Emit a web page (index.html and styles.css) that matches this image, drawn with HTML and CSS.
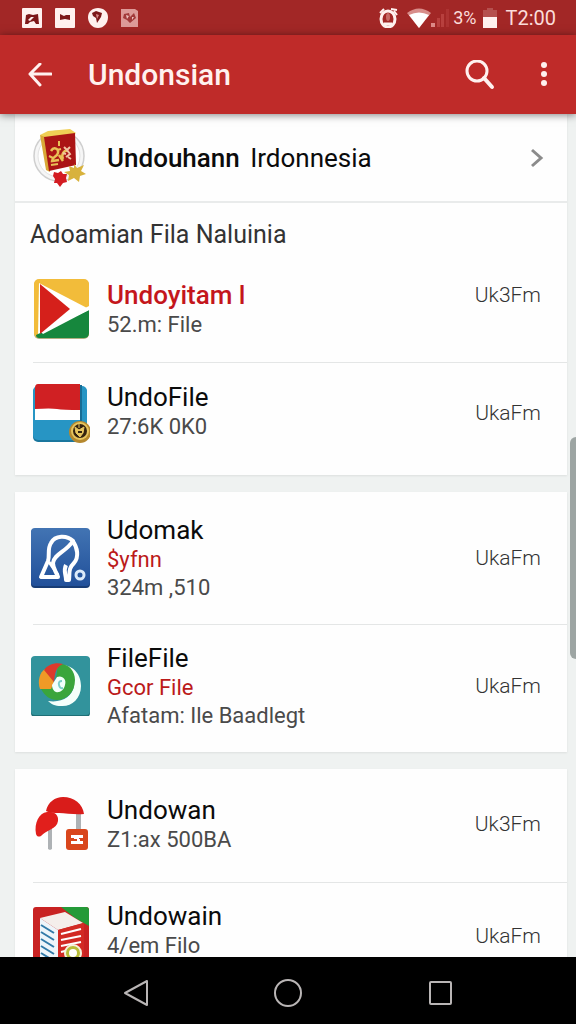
FILE: index.html
```html
<!DOCTYPE html>
<html lang="id">

<head>
    <meta charset="utf-8">
    <meta name="viewport" content="width=device-width, initial-scale=1.0">
    <title>Undonsian</title>
    <link rel="stylesheet" href="styles.css">
</head>

<body>
    <div class="status">
        <div class="status-left">
            <svg width="20" height="20" viewBox="0 0 20 20"><rect width="20" height="20" rx="1" fill="#fff1ef"/><path d="M3 16l1-9 3-1 4 1 5-1 1 10h-3l-2-3-4 1-2 2z" fill="#7d1719"/><path d="M6 12l3-3h3l-4 4z" fill="#fff1ef"/></svg>
            <svg width="20" height="20" viewBox="0 0 20 20"><rect width="20" height="20" rx="1" fill="#fff1ef"/><path d="M5 6l4 2 2-1 4 0v5l-5-1-5 1z" fill="#7d1719"/></svg>
            <svg width="20" height="20" viewBox="0 0 20 20"><path d="M10 0c6 0 10 4 10 9 0 6-4 11-10 11S0 15 0 9c0-5 4-9 10-9z" fill="#fff1ef"/><path d="M4 5l4-2 6 2-1 4-4 6-1-5-3-2z" fill="#7d1719"/><path d="M8 6l3 1-2 4z" fill="#d88"/></svg>
            <svg width="17" height="18" viewBox="0 0 17 18"><path d="M0 0h14l3 2v16H0z" fill="#dd9a98"/><path d="M3 5l5-1 1 4 4-4 2 5-6 5-3-3-4-2z" fill="#a23a3a"/><path d="M5 6l3 1-2 3zM11 8l2 0-2 3z" fill="#efc2c0"/></svg>
        </div>
        <div class="status-right">
            <svg width="20" height="20" viewBox="0 0 20 20"><ellipse cx="9" cy="11" rx="7" ry="8" fill="none" stroke="#fff1ef" stroke-width="3"/><ellipse cx="9" cy="9" rx="2" ry="4" fill="#c76a66"/><path d="M5 16h8" stroke="#fff1ef" stroke-width="3"/><path d="M1 5l4-4M12 1l6 1M15 3l3 4" stroke="#fff1ef" stroke-width="2"/></svg>
            <svg width="24" height="20" viewBox="0 0 24 20"><path d="M0 5Q12-4 24 5L12 20z" fill="#d88d8a"/><path d="M2 7Q12 2 22 7L12 20z" fill="#fff"/></svg>
            <svg width="18" height="20" viewBox="0 0 18 20" fill="#b8403e"><rect y="15" width="4" height="4" fill="#dd8a87"/><rect x="6" y="10" width="3" height="9"/><rect x="10" y="6" width="3" height="13"/><rect x="15" y="1" width="3" height="18" opacity=".5"/></svg>
            <span class="percent">3%</span>
            <svg width="14" height="20" viewBox="0 0 14 20"><path d="M4 0h6v2h4v8H0V2h4z" fill="#b5504e"/><path d="M0 9h14v11H0z" fill="#fff1ef"/></svg>
            <span class="clock">T2:00</span>
        </div>
    </div>

    <header class="appbar">
        <button class="icon-btn" aria-label="Kembali">
            <svg width="24" height="24" viewBox="0 0 24 24" fill="none" stroke="#fff1ef" stroke-width="3" stroke-linecap="round" stroke-linejoin="round"><path d="M23 11H2M12 1L2 11l10 11"/></svg>
        </button>
        <h1>Undonsian</h1>
        <button class="icon-btn" aria-label="Cari">
            <svg width="30" height="30" viewBox="0 0 30 30" fill="none" stroke="#fff1ef" stroke-width="3" stroke-linecap="round"><circle cx="12" cy="11" r="10"/><path d="M19 18l8 9" stroke-width="4"/></svg>
        </button>
        <button class="icon-btn more" aria-label="Menu">
            <svg width="8" height="26" viewBox="0 0 8 26" fill="#fff1ef"><circle cx="4" cy="3" r="3"/><circle cx="4" cy="12" r="3"/><circle cx="4" cy="21" r="3"/></svg>
        </button>
    </header>

    <main>
        <section class="card">
            <a class="featured" href="#">
                <svg class="icon" width="60" height="60" viewBox="0 0 60 60">
                    <circle cx="29" cy="28" r="25" fill="#f6f6f6" stroke="#cfcfcf" stroke-width="1.500"/>
                    <circle cx="29" cy="28" r="21" fill="#fff" stroke="#e2e2e2"/>
                    <path d="M10 7l8-4 22-2 6 4-4 3-29 3z" fill="#f0cf55"/>
                    <path d="M10 7l5 2 5 35-4-2z" fill="#d9a937"/>
                    <path d="M14 9l31-4 1 32-27 6z" fill="#ab1515"/>
                    <path d="M21 23c3-5 8-2 7 2s-6 4-6 8l7-1M29 27l4 6M33 31c-2-5 1-9 5-8" fill="none" stroke="#e9c057" stroke-width="2.500"/>
                    <path d="M21 37l7-1M29 13v5M19 28l4 2M27 22l4-1" fill="none" stroke="#e9c057" stroke-width="2"/>
                    <path d="M34 19l3 3 3-3M37 22l3 4-4 3M33 25l3 1M38 29l3 2" fill="none" stroke="#f0c3a4" stroke-width="2"/>
                    <path d="M44 36l3 4 7-3-3 6 5 3-6 2-1 6-5-4-6 3 1-6-5-3 6-1-1-5 5 2z" fill="#d8b23c"/>
                    <path d="M24 44l4 1 3-2 2 3h4l-1 4 1 4-4 1-3 4-3-4-3 0 1-4-2-3z" fill="#d31c22"/>
                </svg>
                <span class="featured-name"><b>Undouhann</b> Irdonnesia</span>
                <svg width="14" height="20" viewBox="0 0 14 20" fill="none" stroke="#8b8b8b" stroke-width="3"><path d="M2 2l9 8-9 8"/></svg>
            </a>
            <h2>Adoamian Fila Naluinia</h2>
            <ul>
                <li class="row low">
                    <svg class="icon" width="60" height="60" viewBox="0 0 60 60">
                        <rect x="4" y="1" width="55" height="59" rx="5" fill="#b0ae80"/>
                        <rect x="4" width="55" height="59" rx="5" fill="#f2bc3a"/>
                        <path d="M9 4l50 26v3L8 57z" fill="#fff"/>
                        <path d="M59 31v23q0 5-5 5H9q-3 0-3-3z" fill="#16873d"/>
                        <path d="M11 53L59 27v4L13 55z" fill="#fff"/>
                        <path d="M10 5l30 25L10 55z" fill="#d5201b"/>
                    </svg>
                    <div class="info">
                        <h3 class="hot">Undoyitam l</h3>
                        <p>52.m: File</p>
                    </div>
                    <span class="meta">Uk3Fm</span>
                </li>
                <li class="row end">
                    <svg class="icon" width="60" height="60" viewBox="0 0 60 60">
                        <rect x="3" y="4" width="54" height="55" rx="5" fill="#19769d"/>
                        <rect x="3" y="3" width="54" height="54" rx="5" fill="#2795c4"/>
                        <path d="M51 2v36" stroke="#176c94" stroke-width="2"/>
                        <path d="M8 1h42v26H5V5q0-4 3-4z" fill="#d02023"/>
                        <path d="M5 26q16-1 22 0t23 1v10H5z" fill="#fff"/>
                        <circle cx="50" cy="49" r="11" fill="#b5882e"/>
                        <circle cx="50" cy="48" r="9" fill="#e7c55e"/>
                        <circle cx="50" cy="48" r="7" fill="#34230f"/>
                        <path d="M45 44l4 3 5-3-1 6-3 4-4-4zM49 41v4" fill="#e7c55e" stroke="#e7c55e"/>
                        <path d="M48 49h4" stroke="#34230f" stroke-width="2"/>
                    </svg>
                    <div class="info">
                        <h3>UndoFile</h3>
                        <p>27:6K 0K0</p>
                    </div>
                    <span class="meta">UkaFm</span>
                </li>
            </ul>
        </section>

        <section class="card">
            <ul>
                <li class="row three">
                    <svg class="icon" width="60" height="60" viewBox="0 0 60 60">
                        <defs><linearGradient id="blue" x2="0" y2="1"><stop stop-color="#4274b3"/><stop offset="1" stop-color="#21509a"/></linearGradient></defs>
                        <rect x="1" y="1" width="59" height="59" rx="4" fill="#173c75"/>
                        <rect x="1" width="59" height="58" rx="4" fill="url(#blue)"/>
                        <path d="M43 13C37 7 25 7 21 15c-4 6-1 12-3 18L11 49h17c-2-6-5-8-5-14 1-9 13-11 20-22z" fill="none" stroke="#fff" stroke-width="4" stroke-linejoin="round"/>
                        <path d="M42 12c6 8 7 17 2 23-6 6-4 9-5 17h-3c0-6-3-9 0-15" fill="none" stroke="#fff" stroke-width="4" stroke-linejoin="round"/>
                        <path d="M19 34l9 13" stroke="#fff" stroke-width="3"/>
                        <circle cx="50" cy="47" r="4" fill="none" stroke="#dcebfa" stroke-width="3"/>
                    </svg>
                    <div class="info">
                        <h3>Udomak</h3>
                        <p class="tag">$yfnn</p>
                        <p>324m ,510</p>
                    </div>
                    <span class="meta">UkaFm</span>
                </li>
                <li class="row">
                    <svg class="icon" width="60" height="60" viewBox="0 0 60 60">
                        <rect x="1" y="1" width="59" height="60" rx="4" fill="#1f6f76"/>
                        <rect x="1" width="59" height="59" rx="4" fill="#32939c"/>
                        <path d="M31 9c13 0 20 10 20 21 0 13-10 21-20 20-6 0-10-2-13-5 14 2 24-4 26-15z" fill="#f5fffb"/>
                        <path d="M28 8c10-1 17 6 17 16 0 12-8 20-18 20-7 0-12-4-16-11l14-3z" fill="#3aa53c"/>
                        <path d="M10 33C7 25 10 16 15 13l9 13-3 7z" fill="#f09a27"/>
                        <path d="M14 14c4-6 12-8 19-6-7 3-8 8-9 18z" fill="#dc3a2c"/>
                        <path d="M27 21c5-2 10 2 8 8-1 5-5 8-9 7-3-1-4-5-4-7z" fill="#f2fffb"/>
                        <path d="M32 25q-4 0-3 4t4 3" fill="none" stroke="#7bcfc8" stroke-width="2"/>
                    </svg>
                    <div class="info">
                        <h3>FileFile</h3>
                        <p class="tag">Gcor File</p>
                        <p>Afatam: Ile Baadlegt</p>
                    </div>
                    <span class="meta">UkaFm</span>
                </li>
            </ul>
        </section>

        <section class="card">
            <ul>
                <li class="row first">
                    <svg class="icon" width="60" height="60" viewBox="0 0 60 60">
                        <path d="M18 32h4v23l-2 1-2-1zM46 18h5v18h-5z" fill="#aeb2b5"/>
                        <path d="M16 17C18 8 25 3 33 3c11 0 20 7 21 17-9 1-18-1-25-1-5 0-9 0-13-2z" fill="#d91c1a"/>
                        <path d="M6 40C4 29 9 19 17 18c7-1 12 3 11 9-1 8-12 9-17 15-2 1-4 1-5-2z" fill="#e11f1c"/>
                        <rect x="36" y="35" width="22" height="21" rx="3" fill="#d9461c"/>
                        <path d="M41 41h12v3H41zM41 47h12v3H41zM44 43h5v2h-5zM47 45h3v3h-3z" fill="#fff"/>
                    </svg>
                    <div class="info">
                        <h3>Undowan</h3>
                        <p>Z1:ax 500BA</p>
                    </div>
                    <span class="meta">Uk3Fm</span>
                </li>
                <li class="row last">
                    <svg class="icon" width="60" height="60" viewBox="0 0 60 60">
                        <rect x="3" y="1" width="56" height="59" rx="3" fill="#c82222"/>
                        <path d="M31 1h25q3 0 3 3v16l-14-8z" fill="#249a38"/>
                        <path d="M10 12L35 6l18 11-25 7z" fill="#f4eeeb"/>
                        <path d="M10 12l18 12v36H10z" fill="#eef5fa"/>
                        <path d="M28 24l26-7v43H28z" fill="#d22a24"/>
                        <path d="M11 19l13 8M11 26l13 8M11 33l13 8M11 40l13 8M11 47l13 8" stroke="#327aa8" stroke-width="2"/>
                        <path d="M31 28l20-5M31 34l20-4M31 40l20-4M31 46l8-2" stroke="#fff" stroke-width="2"/>
                        <circle cx="43" cy="47" r="8" fill="#b8bd38" stroke="#f7f2dc" stroke-width="2"/>
                        <circle cx="43" cy="47" r="4" fill="#fff"/>
                    </svg>
                    <div class="info">
                        <h3>Undowain</h3>
                        <p>4/em Filo</p>
                    </div>
                    <span class="meta">UkaFm</span>
                </li>
            </ul>
        </section>
        <div class="thumb"></div>
    </main>

    <nav>
        <button aria-label="Back"><svg width="30" height="30" viewBox="0 0 30 30"><path d="M26 3v24L4 15z"/></svg></button>
        <button aria-label="Home"><svg width="30" height="30" viewBox="0 0 30 30"><circle cx="15" cy="15" r="13"/></svg></button>
        <button aria-label="Recent"><svg width="30" height="30" viewBox="0 0 30 30"><rect x="5" y="4" width="21" height="22" rx="1"/></svg></button>
    </nav>
</body>

</html>
```

FILE: styles.css
```css
* {
    box-sizing: border-box;
}

body {
    margin: 0;
    height: 100vh;
    display: flex;
    flex-direction: column;
    font-family: Roboto, "Liberation Sans", sans-serif;
    background-color: #eff2f1;
    color: #0b0b0b;
}

h1,
h2,
h3,
p,
ul {
    margin: 0;
    padding: 0;
    font-weight: 400;
}

svg {
    display: block;
    flex: none;
}

button {
    padding: 0;
    border: 0;
    background: none;
}

/* top bars */
.status {
    flex: none;
    display: flex;
    justify-content: space-between;
    align-items: center;
    height: 35px;
    padding: 0 20px 0 22px;
    background-color: #a22726;
    color: #fbdcda;
    font-size: 20px;
}

.status-left,
.status-right {
    display: flex;
    align-items: center;
}

.status-left {
    gap: 13px;
}

.percent {
    margin: 0 6px 0 4px;
    font-size: 18px;
}

.status-right svg:nth-child(2) {
    margin-left: 8px;
}

.clock {
    margin-left: 9px;
}

.appbar {
    flex: none;
    display: flex;
    align-items: center;
    height: 79px;
    padding: 0 28px;
    background-color: #bf2b29;
    box-shadow: 0 1px 8px rgba(0, 0, 0, .5);
    position: relative;
    z-index: 1;
}

h1 {
    flex: 1;
    margin-left: 36px;
    font-size: 30px;
    font-weight: 500;
    color: #fff1ef;
}

.more {
    margin-left: 45px;
}

/* list */
main {
    flex: 1;
    min-height: 0;
    overflow: hidden;
    position: relative;
    padding: 0 9px 0 15px;
}

.card {
    margin-bottom: 17px;
    background-color: #fefefe;
    box-shadow: 0 1px 2px rgba(0, 0, 0, .08);
}

.featured {
    display: flex;
    align-items: center;
    height: 89px;
    padding: 0 23px 0 15px;
    border-bottom: 2px solid #e9ebeb;
    color: inherit;
    text-decoration: none;
}

.featured-name {
    flex: 1;
    margin-left: 17px;
    font-size: 26px;
}

.featured-name b {
    margin-right: 4px;
    font-weight: 500;
}

h2 {
    padding: 16px 15px 4px;
    font-size: 25px;
    line-height: 32px;
    color: #333;
}

ul {
    list-style: none;
}

.row {
    display: flex;
    align-items: center;
    margin-left: 18px;
    padding: 17px 26px 22px 0;
}

.row + .row {
    border-top: 1px solid #e4e6e6;
}

.row .icon {
    margin-left: -3px;
}

.low {
    padding-top: 24px;
    padding-bottom: 23px;
}

.low .meta {
    align-self: flex-start;
}

.end {
    padding-top: 18px;
    padding-bottom: 30px;
}

.end .info {
    padding-bottom: 4px;
}

.three {
    padding-top: 22px;
}

.first {
    padding-top: 25px;
    padding-bottom: 28px;
}

.last .info {
    padding-bottom: 12px;
}

.info {
    flex: 1;
    margin-left: 17px;
}

h3 {
    font-size: 26px;
    line-height: 32px;
}

.info p {
    font-size: 22px;
    line-height: 28px;
    color: #4a4a4a;
}

.info .hot {
    color: #c4161c;
    font-weight: 500;
}

.info .tag {
    color: #bb1a1a;
}

.meta {
    font-size: 21px;
    font-weight: 300;
    line-height: 32px;
    color: #333;
}

.thumb {
    position: absolute;
    top: 38.3%;
    right: 0;
    width: 6px;
    height: 26.3%;
    border-radius: 6px 0 0 6px;
    background-color: #9da5a3;
}

/* system buttons */
nav {
    flex: none;
    display: flex;
    justify-content: center;
    align-items: center;
    gap: 122px;
    height: 67px;
    padding-top: 4px;
    background-color: #000;
}

nav svg {
    fill: none;
    stroke: #b9b5b5;
    stroke-width: 2;
    stroke-linejoin: round;
}
```
